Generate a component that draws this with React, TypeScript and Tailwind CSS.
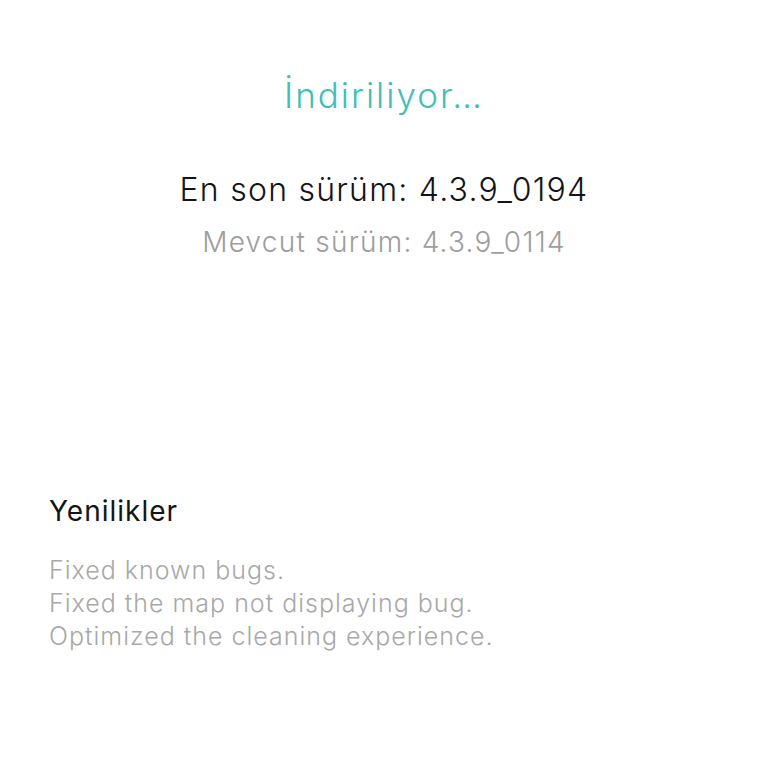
import React from 'react';

const notes = [
  'Fixed known bugs.',
  'Fixed the map not displaying bug.',
  'Optimized the cleaning experience.',
];

export default function App() {
  return (
    <div className="min-h-[768px] w-[768px] bg-white font-['Inter','Noto_Sans',sans-serif]">
      <div className="flex flex-col items-center pt-[73px]">
        <h1 className="text-[35px] leading-[44px] font-light tracking-[2px] text-[#44bdb8]">İndiriliyor…</h1>
        <p className="mt-[52px] text-[32px] leading-[42px] font-light tracking-[1.25px] text-[#141414]">En son sürüm: 4.3.9_0194</p>
        <p className="mt-[13px] text-[28px] leading-[36px] font-light tracking-[1.25px] text-[#9d9d9d]">Mevcut sürüm: 4.3.9_0114</p>
      </div>
      <div className="px-[49px] pt-[233px]">
        <h2 className="text-[28px] leading-[36px] font-normal tracking-[1px] text-[#141414]">Yenilikler</h2>
        <div className="mt-[25px] text-[25px] leading-[33px] font-light tracking-[1px] text-[#a8a8a8]">
          {notes.map((n) => (
            <p key={n}>{n}</p>
          ))}
        </div>
      </div>
    </div>
  );
}
